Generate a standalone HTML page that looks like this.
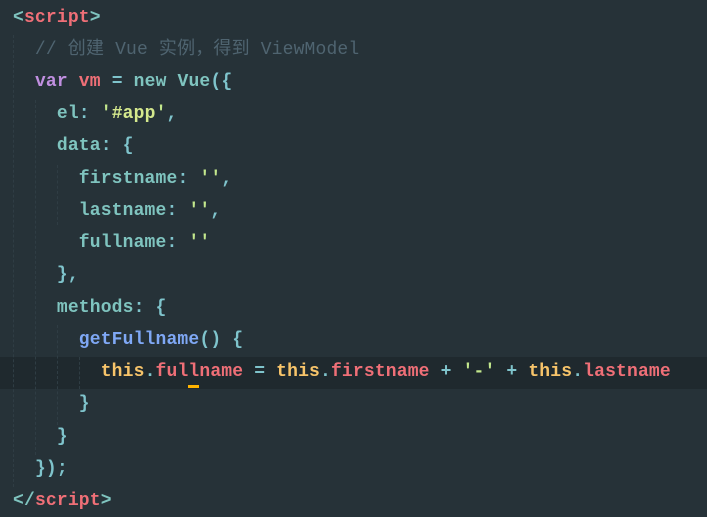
<!DOCTYPE html><html><head><style>
body{margin:0;width:707px;height:513px;background:#263238;overflow:hidden;position:relative;font-family:"Liberation Mono","Noto Sans CJK SC",monospace;font-weight:bold;font-size:18px;letter-spacing:0.16px}
.l{position:absolute;left:13px;height:32px;line-height:32px;white-space:pre;color:#7fc4cc}
.hl{position:absolute;left:0;width:707px;top:357px;height:32px;background:#1f292e}
.g{position:absolute;width:0;border-left:1px dashed #2f3d44}
.t{color:#ef6f77}.p{color:#7fc4cc}.c{color:#4f6470;font-weight:normal}.k{color:#c08fe0}.s{color:#c3e88d}.y{color:#f7c46a}.b{color:#7fa8f5}.q{color:#7fc4bf}.w{color:#c3e88d}
</style></head><body>
<div class="hl"></div>
<div class="g" style="left:13px;top:35px;height:452px"></div>
<div class="g" style="left:35px;top:100px;height:355px"></div>
<div class="g" style="left:57px;top:165px;height:60px"></div>
<div class="g" style="left:57px;top:325px;height:100px"></div>
<div class="g" style="left:79px;top:357px;height:32px"></div>
<div class="l" style="top:2px"><span class="q">&lt;</span><span class="t">script</span><span class="q">&gt;</span></div>
<div class="l c" style="top:34px">  // 创建 Vue 实例，得到 ViewModel</div>
<div class="l" style="top:66px">  <span class="k">var</span> <span class="t">vm</span> <span class="p">=</span> <span class="q">new Vue</span><span class="p">({</span></div>
<div class="l" style="top:98px">    <span class="q">el</span><span class="p">:</span> <span class="w">'</span><span class="s" style="color:#d4e88d">#app</span><span class="w">'</span><span class="p">,</span></div>
<div class="l" style="top:130px">    <span class="q">data</span><span class="p">: {</span></div>
<div class="l" style="top:163px">      <span class="q">firstname</span><span class="p">:</span> <span class="w">''</span><span class="p">,</span></div>
<div class="l" style="top:195px">      <span class="q">lastname</span><span class="p">:</span> <span class="w">''</span><span class="p">,</span></div>
<div class="l" style="top:227px">      <span class="q">fullname</span><span class="p">:</span> <span class="w">''</span></div>
<div class="l" style="top:259px">    <span class="p">},</span></div>
<div class="l" style="top:292px">    <span class="q">methods</span><span class="p">: {</span></div>
<div class="l" style="top:324px">      <span class="b">getFullname</span><span class="p">() {</span></div>
<div class="l" style="top:356px">        <span class="y">this</span><span class="p">.</span><span class="t">fullname</span> <span class="p">=</span> <span class="y">this</span><span class="p">.</span><span class="t">firstname</span> <span class="p">+</span> <span class="w">'-'</span> <span class="p">+</span> <span class="y">this</span><span class="p">.</span><span class="t">lastname</span></div>
<div style="position:absolute;left:188px;top:385px;width:11px;height:3px;background:#ffb300"></div>
<div class="l" style="top:388px">      <span class="p">}</span></div>
<div class="l" style="top:421px">    <span class="p">}</span></div>
<div class="l" style="top:453px">  <span class="p">});</span></div>
<div class="l" style="top:485px"><span class="q">&lt;/</span><span class="t">script</span><span class="q">&gt;</span></div>
</body></html>
